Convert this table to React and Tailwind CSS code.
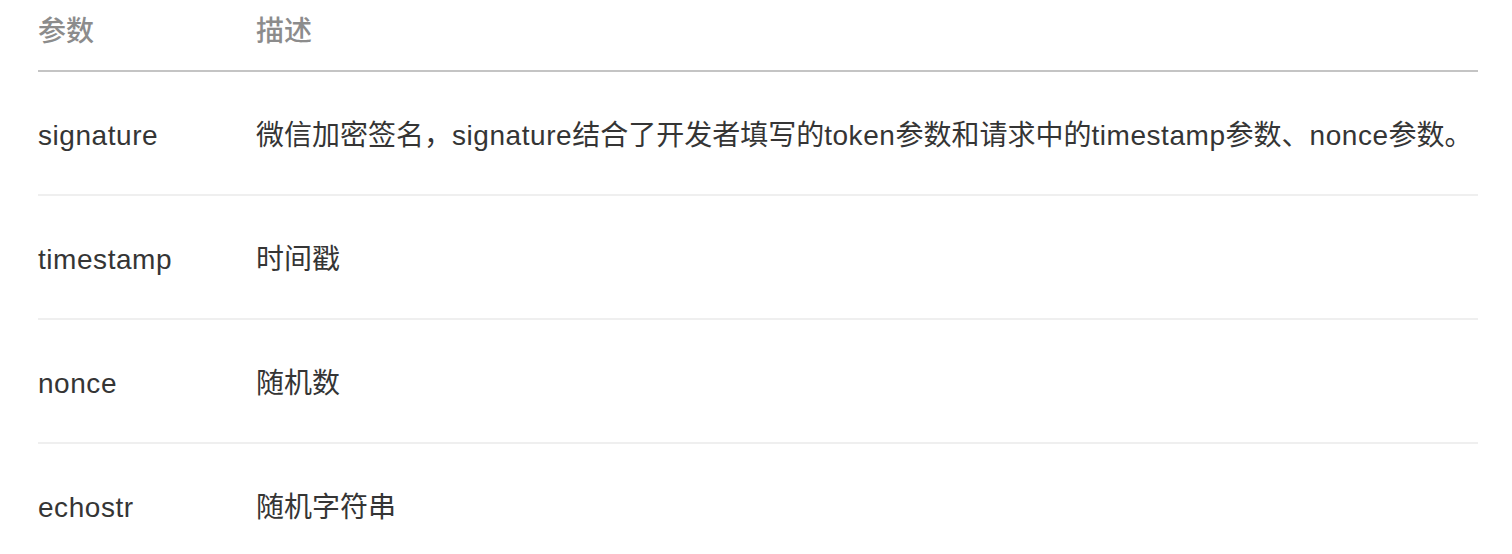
const rows = [
  ["signature", ["微信加密签名，", "signature", "结合了开发者填写的", "token", "参数和请求中的", "timestamp", "参数、", "nonce", "参数。"]],
  ["timestamp", ["时间戳"]],
  ["nonce", ["随机数"]],
  ["echostr", ["随机字符串"]],
];

// Latin runs get a little tracking to match the wider system font
function Rich({ parts }) {
  return parts.map((p, i) =>
    /^[a-z]+$/.test(p) ? (
      <span key={i} className="tracking-[0.55px]">{p}</span>
    ) : (
      <span key={i}>{p}</span>
    )
  );
}

export default function App() {
  return (
    <div
      className="bg-white px-[38px] text-[28px] text-[#353535]"
      style={{ fontFamily: '"Liberation Sans", "Noto Sans CJK SC", sans-serif' }}
    >
      <div className="w-[1440px]">
        <div className="flex h-[72px] items-center border-b-2 border-[#c4c4c4] pb-[6px] font-medium text-[#8c8c8c]">
          <div className="w-[218px]">参数</div>
          <div>描述</div>
        </div>
        {rows.map(([name, desc], i) => (
          <div
            key={name}
            className={`flex items-center whitespace-nowrap pt-[5px] ${
              i < rows.length - 1 ? "h-[124px] border-b-2 border-[#efefef]" : "h-[122px]"
            }`}
          >
            <div className="w-[218px] tracking-[0.55px]">{name}</div>
            <div>
              <Rich parts={desc} />
            </div>
          </div>
        ))}
      </div>
    </div>
  );
}
